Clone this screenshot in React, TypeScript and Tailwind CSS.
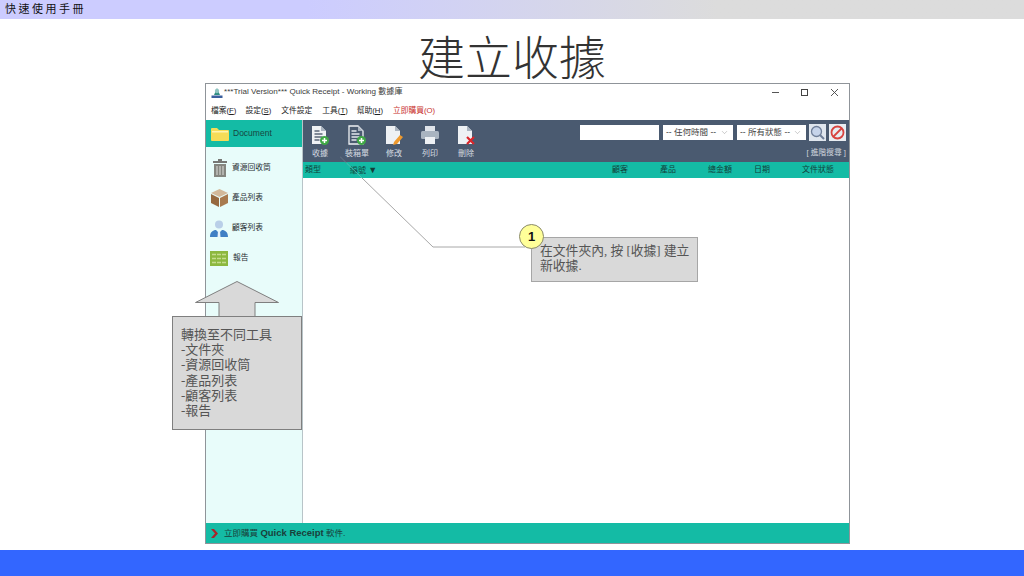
import React from "react";
import { ChevronDown } from "lucide-react";

const cjk = "font-['Liberation_Sans','Noto_Sans_CJK_TC',sans-serif]";
const serif = "font-['Liberation_Serif','Noto_Sans_CJK_TC',serif]";

function Doc({ badge }: { badge: "add" | "list" | "edit" | "del" }) {
  return (
    <svg width="20" height="21" viewBox="0 0 20 21">
      <path d="M2 1h9l5 5v13H2z" fill={badge === "list" ? "none" : "#eef1f4"} stroke={badge === "list" ? "#eef1f4" : "none"} strokeWidth="1.300" />
      <path d="M11 1l5 5h-5z" fill="#aab4c0" />
      {(badge === "add" || badge === "list") && (
        <g stroke={badge === "list" ? "#e4e8ec" : "#5b6778"} strokeWidth="1.400">
          <path d="M4.500 6h5M4.500 9h8M4.500 12h8M4.500 15h5" />
        </g>
      )}
      {(badge === "add" || badge === "list") && (
        <g>
          <circle cx="14.500" cy="15.500" r="4.500" fill="#3fa845" />
          <path d="M14.500 13v5M12 15.500h5" stroke="#fff" strokeWidth="1.500" />
        </g>
      )}
      {badge === "edit" && <path d="M10 17l6-7 3 2-6 7-4 1z" fill="#ef9a2e" />}
      {badge === "del" && <path d="M11 12l7 7M18 12l-7 7" stroke="#d9262b" strokeWidth="2.200" />}
    </svg>
  );
}

function Printer() {
  return (
    <svg width="20" height="21" viewBox="0 0 20 21">
      <rect x="5" y="1" width="10" height="5" fill="#dfe4ea" />
      <rect x="1" y="6" width="18" height="8" rx="1.500" fill="#a9b4c0" />
      <rect x="5" y="12" width="10" height="7" fill="#eef1f4" />
    </svg>
  );
}

function Tool({ icon, label, w }: { icon: React.ReactNode; label: string; w: string }) {
  return (
    <div className={`mt-[1px] flex flex-col items-center ${w}`}>
      <div className="h-[21px]">{icon}</div>
      <span className="mt-[3px] whitespace-nowrap text-[8px] leading-[10px] text-[#d5dae0]">{label}</span>
    </div>
  );
}

function Side({ icon, label, gap }: { icon: React.ReactNode; label: string; gap: string }) {
  return (
    <div className={`flex h-[30px] items-center ${gap}`}>
      {icon}
      <span className="text-[7.750px] leading-[10px] text-[#262b30]">{label}</span>
    </div>
  );
}

const Trash = (
  <svg width="14" height="18" viewBox="0 0 14 18" className="ml-[7px]">
    <rect x="5" y="0" width="4" height="2" fill="#777774" />
    <rect x="0" y="2" width="14" height="2" fill="#777774" />
    <path d="M1 5h12v13H1z" fill="#85857f" />
    <path d="M4 7v9M7 7v9M10 7v9" stroke="#d8d8d4" strokeWidth="1.100" />
  </svg>
);
const Box = (
  <svg width="17" height="18" viewBox="0 0 17 18" className="ml-[5px]">
    <path d="M8.500 0L17 4l-8.500 4L0 4z" fill="#d2b99a" />
    <path d="M0 5l8 4v9l-8-4z" fill="#96693f" />
    <path d="M17 5l-8 4v9l8-4z" fill="#a87a4e" />
  </svg>
);
const Person = (
  <svg width="18" height="17" viewBox="0 0 18 17" className="ml-[4px]">
    <circle cx="9" cy="4.500" r="4" fill="#b9cfe8" />
    <path d="M0 17c0-5 3-7 6-7l3 3 3-3c3 0 6 2 6 7z" fill="#3f7fc4" />
    <path d="M8 11h2l.5 6h-3z" fill="#e8f2fb" />
  </svg>
);
const Grid = (
  <svg width="18" height="15" viewBox="0 0 18 15" className="ml-[4px]">
    <rect width="18" height="15" fill="#8cb83f" />
    <path d="M2 3.500h14M2 7.500h14M2 11.500h14" stroke="#c5dc8e" strokeWidth="1.400" />
    <path d="M6.500 1.500v12M11.500 1.500v12" stroke="#8cb83f" strokeWidth="1" />
  </svg>
);

function Select({ label, w }: { label: string; w: string }) {
  return (
    <div className={`flex h-[15px] items-center justify-between bg-white pl-[3px] pr-[4px] ${w}`}>
      <span className="whitespace-nowrap text-[8.500px] leading-none text-[#444]">{label}</span>
      <ChevronDown size={9} strokeWidth={1} color="#777" />
    </div>
  );
}

export default function App() {
  return (
    <div className={`relative flex h-[576px] w-[1024px] flex-col overflow-hidden bg-white ${cjk}`}>
      <div className="flex h-[19px] items-center bg-gradient-to-r from-[#ccccff] from-30% to-[#dcdcdc] to-70% pl-[5px]">
        <span className="text-[11px] leading-none tracking-[2.500px] text-[#111]">快速使用手冊</span>
      </div>

      <div className="flex h-[64px] items-center justify-center pt-[17px]">
        <span className={`text-[47px] font-light leading-none text-[#333] ${serif}`}>建立收據</span>
      </div>

      <div className="ml-[205px] flex h-[461px] w-[645px] flex-col border border-[#8f9499]">
        <div className="flex h-[17px] items-center pl-[5px]">
          <svg width="12" height="12" viewBox="0 0 12 12">
            <path d="M6 1l3 7H3z" fill="#2f8f83" />
            <circle cx="6" cy="4" r="2.200" fill="#8fc4c0" />
            <rect x="0.500" y="8.500" width="11" height="2.500" fill="#3a5f9e" />
          </svg>
          <span className="ml-[1px] text-[8.050px] leading-none text-[#3b3b3b]">
            ***Trial Version*** Quick Receipt - Working 數據庫
          </span>
          <div className="ml-auto flex items-center">
            <span className="h-px w-[7px] bg-[#555]" />
            <span className="ml-[22px] h-[7px] w-[7px] border border-[#444]" />
            <svg width="9" height="9" viewBox="0 0 9 9" className="ml-[22px] mr-[10px]">
              <path d="M1 1l7 7M8 1l-7 7" stroke="#444" strokeWidth="0.900" />
            </svg>
          </div>
        </div>
        <div className="flex h-[19px] items-center pl-[5px] text-[7.750px] leading-none text-[#222]">
          <span>檔案(<u>F</u>)</span>
          <span className="ml-[9px]">設定(<u>S</u>)</span>
          <span className="ml-[10px]">文件設定</span>
          <span className="ml-[10px]">工具(<u>T</u>)</span>
          <span className="ml-[9px]">幫助(<u>H</u>)</span>
          <span className="ml-[10px] text-[#c9302c]">立即購買(O)</span>
        </div>

        <div className="flex min-h-0 flex-1">
          <div className="flex w-[97px] flex-col border-r border-[#b8c4c8] bg-[#e8fcfa]">
            <div className="flex h-[27px] items-center bg-[#14bba5] pl-[5px]">
              <svg width="18" height="14" viewBox="0 0 18 14">
                <path d="M0 2a1 1 0 011-1h5l2 2h9a1 1 0 011 1v9a1 1 0 01-1 1H1a1 1 0 01-1-1z" fill="#f6dc57" />
                <rect x="1" y="4" width="16" height="1.500" fill="#fff3b0" />
              </svg>
              <span className="ml-[4px] text-[8.500px] leading-none text-[#17463f]">Document</span>
            </div>
            <div className="mt-[6px] flex flex-col">
              <Side icon={Trash} label="資源回收筒" gap="gap-[5px]" />
              <Side icon={Box} label="產品列表" gap="gap-[4px]" />
              <Side icon={Person} label="顧客列表" gap="gap-[4px]" />
              <Side icon={Grid} label="報告" gap="gap-[5px]" />
            </div>
          </div>

          <div className="flex min-w-0 flex-1 flex-col">
            <div className="flex h-[42px] bg-[#4a5a70] pl-[7px] pr-[3px] pt-[4px]">
              <Tool icon={<Doc badge="add" />} label="收據" w="w-[20px]" />
              <Tool icon={<Doc badge="list" />} label="裝箱單" w="ml-[17px] w-[20px]" />
              <Tool icon={<Doc badge="edit" />} label="修改" w="ml-[17px] w-[20px]" />
              <Tool icon={<Printer />} label="列印" w="ml-[16px] w-[20px]" />
              <Tool icon={<Doc badge="del" />} label="刪除" w="ml-[16px] w-[20px]" />
              <div className="ml-auto flex flex-col items-end">
                <div className="flex h-[17px] items-center">
                  <div className="h-[15px] w-[79px] bg-white" />
                  <div className="ml-[4px]"><Select label="-- 任何時間 --" w="w-[70px]" /></div>
                  <div className="ml-[4px]"><Select label="-- 所有狀態 --" w="w-[69px]" /></div>
                  <div className="ml-[3px] flex h-[17px] w-[17px] items-center justify-center bg-[#dfe6ee]">
                    <svg width="15" height="15" viewBox="0 0 15 15">
                      <circle cx="6.500" cy="6.500" r="5" fill="#c6d4ea" stroke="#6f7f99" strokeWidth="1.300" />
                      <path d="M10 10l4 4" stroke="#6f7f99" strokeWidth="2" />
                    </svg>
                  </div>
                  <div className="ml-[3px] flex h-[17px] w-[17px] items-center justify-center bg-[#e8edf2]">
                    <svg width="15" height="15" viewBox="0 0 15 15">
                      <circle cx="7.500" cy="7.500" r="6" fill="none" stroke="#d8433f" strokeWidth="1.800" />
                      <path d="M3.500 11.500l8-8" stroke="#d8433f" strokeWidth="1.800" />
                    </svg>
                  </div>
                </div>
                <span className="mt-[7px] text-[7.750px] leading-[10px] text-[#cfd5dc]">[ 進階搜尋 ]</span>
              </div>
            </div>
            <div className="flex h-[16px] items-center bg-[#14bba5] text-[8px] leading-none text-[#123f3a]">
              <span className="ml-[2px] w-[45px]">類型</span>
              <span className="w-[262px]">編號 <span className="text-[9px]">▼</span></span>
              <span className="w-[48px]">顧客</span>
              <span className="w-[48px]">產品</span>
              <span className="w-[46px]">總金額</span>
              <span className="w-[48px]">日期</span>
              <span>文件狀態</span>
            </div>
            <div className="min-h-0 flex-1 bg-white" />
          </div>
        </div>

        <div className="flex h-[20px] items-center bg-[#14bba5] pl-[5px]">
          <svg width="8" height="9" viewBox="0 0 8 9">
            <path d="M0 0h3l4 4.500L3 9H0l4-4.500z" fill="#a8242a" />
          </svg>
          <span className="ml-[5px] text-[8.500px] leading-none text-[#1a3f3b]">
            立即購買 <b className="font-['Liberation_Sans'] text-[9.500px]">Quick Receipt</b> 軟件.
          </span>
        </div>
      </div>

      <div className="mt-[6px] flex-1 bg-[#3366ff]" />

      <svg width="185" height="92" viewBox="0 0 185 92" className="absolute left-[340px] top-[156px]">
        <path d="M0 0.500L6.500 7" fill="none" stroke="#6a7686" strokeWidth="1" />
        <path d="M6.500 7L22 22" fill="none" stroke="#4fbfb0" strokeWidth="1" />
        <path d="M22 22L93 91H185" fill="none" stroke="#a8a8a8" strokeWidth="1" />
      </svg>

      <div className={`absolute left-[531px] top-[237px] h-[45px] w-[167px] border border-[#a6a6a6] bg-[#d9d9d9] pl-[8px] pr-[2px] pt-[6px] text-[12.800px] leading-[14.500px] text-[#555] ${serif}`}>
        在文件夾內, 按 [收據] 建立<br />新收據.
      </div>
      <div className="absolute left-[519px] top-[224px] flex h-[25px] w-[25px] items-center justify-center rounded-full border border-[#8a8a6a] bg-[#ffff99] font-['Liberation_Sans'] text-[13px] font-bold text-[#111]">
        1
      </div>

      <svg width="84" height="36" viewBox="0 0 84 36" className="absolute left-[195px] top-[281px]">
        <path d="M0.500 21.500L42 0.500L83.500 21.500H60V35.500H24V21.500Z" fill="#d9d9d9" stroke="#7f7f7f" strokeWidth="1" />
      </svg>
      <div className={`absolute left-[172px] top-[316px] h-[114px] w-[130px] border border-[#7f7f7f] bg-[#d9d9d9] pl-[8px] pt-[10px] text-[13px] leading-[15.200px] text-[#555] ${serif}`}>
        <div>轉換至不同工具</div>
        <div>-文件夾</div>
        <div>-資源回收筒</div>
        <div>-產品列表</div>
        <div>-顧客列表</div>
        <div>-報告</div>
      </div>
    </div>
  );
}
